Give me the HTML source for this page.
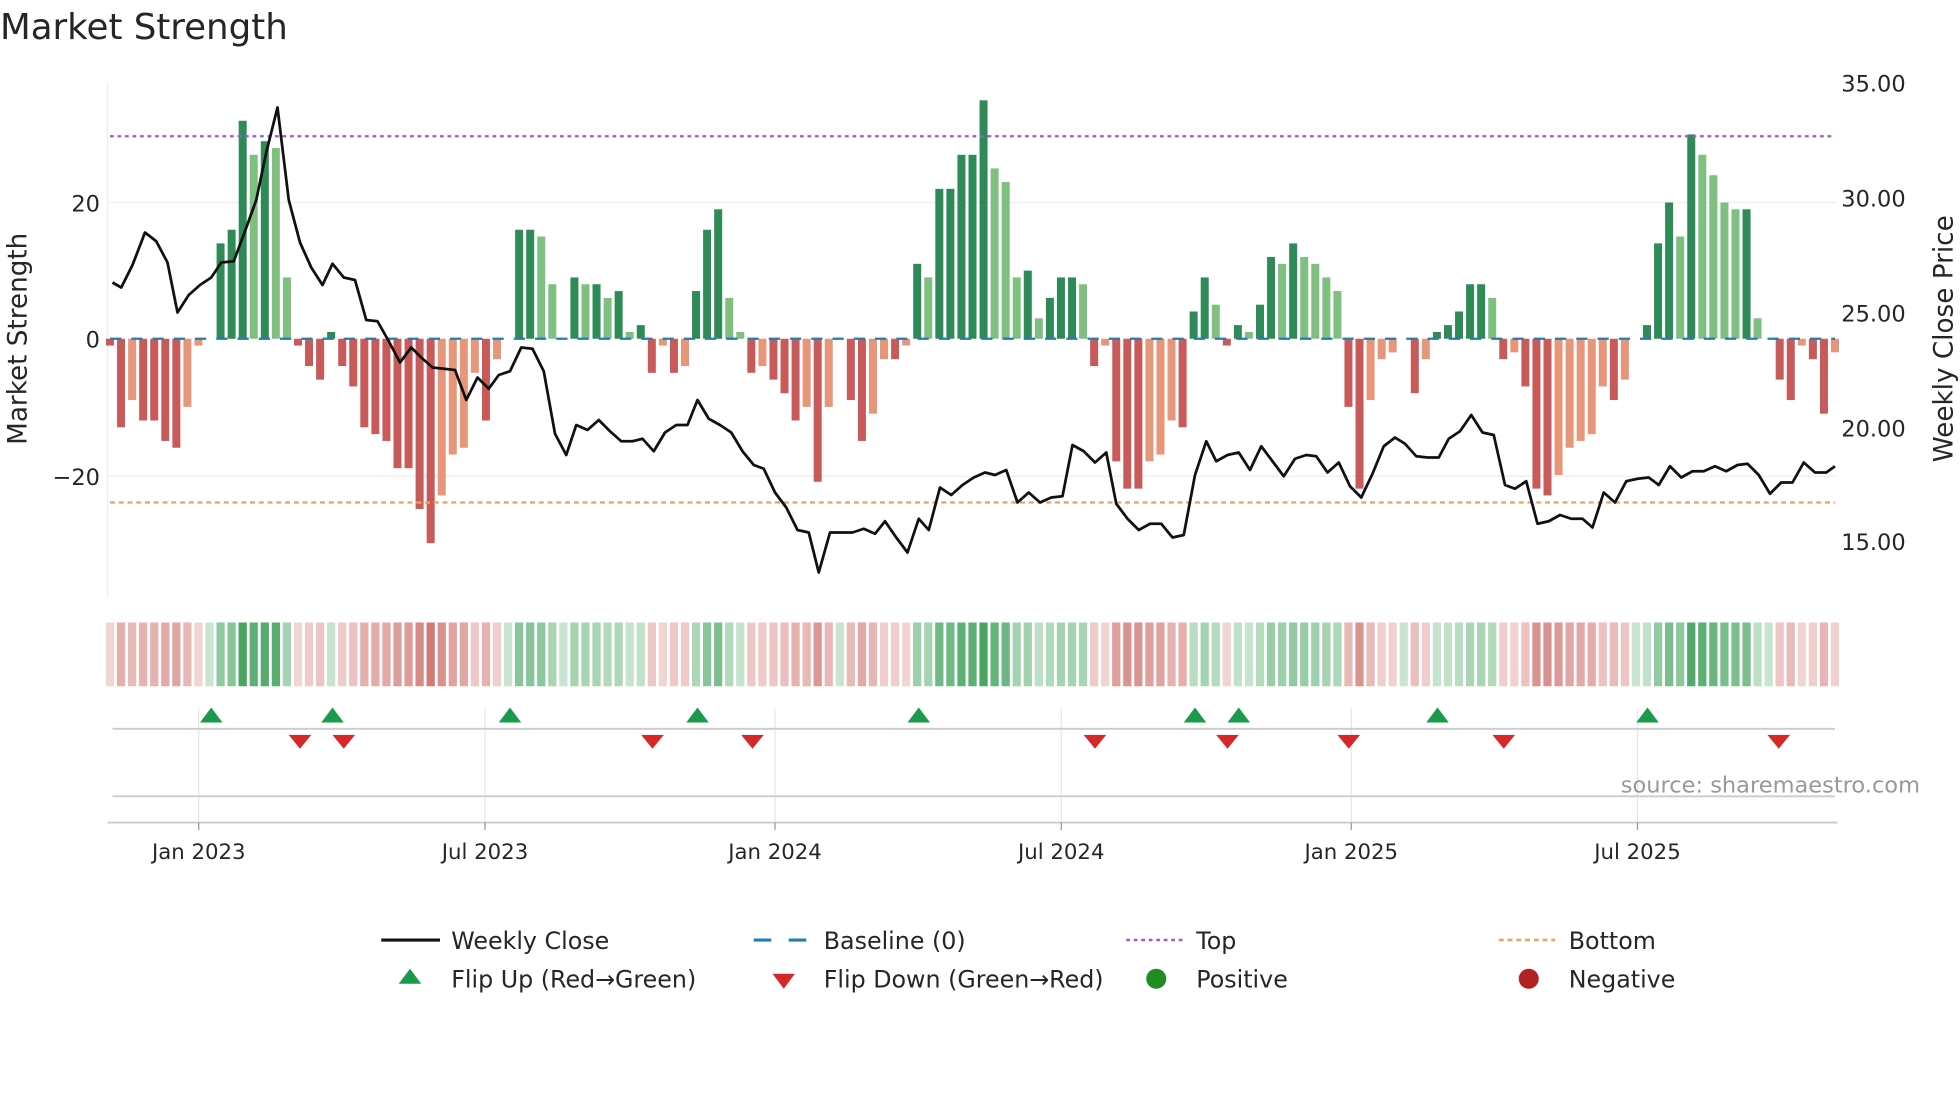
<!DOCTYPE html>
<html><head><meta charset="utf-8">
<style>
html,body{margin:0;padding:0;background:#fff;width:1960px;height:1102px;overflow:hidden}
svg{display:block}
text{font-family:"DejaVu Sans","Liberation Sans",sans-serif;fill:#262626}
</style></head>
<body>
<svg id="s" width="1960" height="1102" viewBox="0 0 1568 881.6" xmlns="http://www.w3.org/2000/svg">
<text x="0" y="31" font-size="28.5">Market Strength</text>
<line x1="86" y1="162" x2="1470" y2="162" stroke="#eee" stroke-width="1"/>
<line x1="86" y1="381" x2="1470" y2="381" stroke="#eee" stroke-width="1"/>
<line x1="86" y1="66" x2="86" y2="478" stroke="#eee" stroke-width="1"/>
<g font-size="18">
<text x="80" y="169" text-anchor="end">20</text>
<text x="80" y="278" text-anchor="end">0</text>
<text x="80" y="388" text-anchor="end">−20</text>
<text x="1473" y="73">35.00</text>
<text x="1473" y="165">30.00</text>
<text x="1473" y="257">25.00</text>
<text x="1473" y="349">20.00</text>
<text x="1473" y="440">15.00</text>
</g>
<text transform="translate(21,271) rotate(-90)" font-size="21" text-anchor="middle">Market Strength</text>
<text transform="translate(1562,271) rotate(-90)" font-size="21" text-anchor="middle">Weekly Close Price</text>
<g id="bars"></g>
<line x1="88" y1="109" x2="1468" y2="109" stroke="#9b59d6" stroke-width="1.8" stroke-dasharray="3,3"/>
<line x1="88" y1="402" x2="1468" y2="402" stroke="#f0a060" stroke-width="1.8" stroke-dasharray="4,3"/>
<line x1="88" y1="271" x2="1468" y2="271" stroke="#2a7ab0" stroke-width="1.8" stroke-dasharray="9,8"/>
<polyline id="price" fill="none" stroke="#111" stroke-width="2.2" stroke-linejoin="round"/>
<g id="heat"></g>
<g stroke="#e6e6ea" stroke-width="1">
<line x1="159" y1="567" x2="159" y2="658"/><line x1="388" y1="567" x2="388" y2="658"/><line x1="620" y1="567" x2="620" y2="658"/><line x1="849" y1="567" x2="849" y2="658"/><line x1="1081" y1="567" x2="1081" y2="658"/><line x1="1310" y1="567" x2="1310" y2="658"/>
</g>
<line x1="90" y1="583" x2="1468" y2="583" stroke="#ccc" stroke-width="1.5"/>
<line x1="90" y1="637" x2="1468" y2="637" stroke="#ccc" stroke-width="1.5"/>
<line x1="86" y1="658" x2="1470" y2="658" stroke="#ccc" stroke-width="1.5"/>
<g stroke="#999" stroke-width="1">
<line x1="159" y1="658" x2="159" y2="664"/><line x1="388" y1="658" x2="388" y2="664"/><line x1="620" y1="658" x2="620" y2="664"/><line x1="849" y1="658" x2="849" y2="664"/><line x1="1081" y1="658" x2="1081" y2="664"/><line x1="1310" y1="658" x2="1310" y2="664"/>
</g>
<g font-size="17" text-anchor="middle">
<text x="159" y="687">Jan 2023</text><text x="388" y="687">Jul 2023</text><text x="620" y="687">Jan 2024</text><text x="849" y="687">Jul 2024</text><text x="1081" y="687">Jan 2025</text><text x="1310" y="687">Jul 2025</text>
</g>
<g id="mk"></g>
<text x="1536" y="634" font-size="18" text-anchor="end" style="fill:#999">source: sharemaestro.com</text>
<g font-size="19">
<line x1="305" y1="752" x2="352" y2="752" stroke="#111" stroke-width="2.5"/>
<text x="361" y="759">Weekly Close</text>
<line x1="603" y1="752" x2="617" y2="752" stroke="#2a7ab0" stroke-width="2.5"/><line x1="631" y1="752" x2="645" y2="752" stroke="#2a7ab0" stroke-width="2.5"/>
<text x="659" y="759">Baseline (0)</text>
<line x1="901" y1="752" x2="946" y2="752" stroke="#9b59d6" stroke-width="2" stroke-dasharray="3,3"/>
<text x="957" y="759">Top</text>
<line x1="1199" y1="752" x2="1244" y2="752" stroke="#f0a060" stroke-width="2" stroke-dasharray="4,3"/>
<text x="1255" y="759">Bottom</text>
<polygon points="328,775 319,787 337,787" fill="#1a9a4a"/>
<text x="361" y="790">Flip Up (Red→Green)</text>
<polygon points="618,779 636,779 627,791" fill="#d62828"/>
<text x="659" y="790">Flip Down (Green→Red)</text>
<circle cx="925" cy="783" r="8" fill="#228b22"/>
<text x="957" y="790">Positive</text>
<circle cx="1223" cy="783" r="8" fill="#b22222"/>
<text x="1255" y="790">Negative</text>
</g>
</svg>
<script>
var v=[-1,-13,-9,-12,-12,-15,-16,-10,-1,0,14,16,32,27,29,28,9,-1,-4,-6,1,-4,-7,-13,-14,-15,-19,-19,-25,-30,-23,-17,-16,-5,-12,-3,0,16,16,15,8,0,9,8,8,6,7,1,2,-5,-1,-5,-4,7,16,19,6,1,-5,-4,-6,-8,-12,-10,-21,-10,0,-9,-15,-11,-3,-3,-1,11,9,22,22,27,27,35,25,23,9,10,3,6,9,9,8,-4,-1,-18,-22,-22,-18,-17,-12,-13,4,9,5,-1,2,1,5,12,11,14,12,11,9,7,-10,-22,-9,-3,-2,0,-8,-3,1,2,4,8,8,6,-3,-2,-7,-22,-23,-20,-16,-15,-14,-7,-9,-6,0,2,14,20,15,30,27,24,20,19,19,3,0,-6,-9,-1,-3,-11,-2];
var NS="http://www.w3.org/2000/svg";
function el(t,a,p){var e=document.createElementNS(NS,t);for(var k in a)e.setAttribute(k,a[k]);document.getElementById(p).appendChild(e);return e;}
var n=v.length,step=(1468-88)/(n-1);
for(var i=0;i<n;i++){
 var x=88+i*step,val=v[i],prev=i?v[i-1]:0,h=Math.abs(val)*5.45;
 var grow=(Math.sign(val)!=Math.sign(prev))||Math.abs(val)>=Math.abs(prev);
 var c=val>=0?(grow?"#2e8b57":"#7fbf7f"):(grow?"#c85a5a":"#e8967a");
 if(val!=0)el("rect",{x:x-3.2,y:val>0?271-h:271,width:6.4,height:h,fill:c},"bars");
 var a=Math.min(1,Math.abs(val)/32);var hc;
 if(val>=0){hc="rgba(40,150,70,"+(0.25+0.6*a)+")";}else{hc="rgba(195,75,70,"+(0.22+0.55*a)+")";}
 el("rect",{x:x-3.3,y:498,width:6.6,height:51,fill:hc},"heat");
}
var p=[[90,226],[97,230],[106,212],[116,186],[125,193],[134,210],[142,250],[151,236],[160,228],[169,222],[177,210],[187,209],[196,185],[205,160],[213,122],[222,86],[231,160],[240,194],[249,214],[258,228],[266,211],[275,222],[284,224],[293,256],[302,257],[311,273],[320,290],[329,278],[337,286],[346,294],[355,295],[364,296],[373,320],[382,302],[391,311],[399,300],[408,297],[417,278],[426,279],[435,297],[444,347],[453,364],[461,340],[470,344],[479,336],[488,345],[497,353],[506,353],[514,351],[523,361],[532,346],[541,340],[550,340],[558,320],[567,335],[576,340],[585,346],[594,361],[603,372],[611,375],[620,394],[629,406],[638,424],[647,426],[655,458],[664,426],[673,426],[682,426],[691,423],[700,427],[708,417],[717,430],[726,442],[735,415],[743,424],[752,390],[761,396],[770,388],[779,382],[788,378],[796,380],[805,376],[814,402],[823,394],[832,402],[841,398],[850,397],[858,356],[867,361],[876,370],[885,362],[893,403],[902,415],[911,424],[920,419],[929,419],[938,430],[947,428],[956,380],[965,353],[973,369],[982,364],[991,362],[1000,376],[1009,357],[1018,369],[1027,381],[1036,367],[1045,364],[1053,365],[1062,378],[1071,370],[1080,389],[1089,398],[1098,379],[1107,357],[1116,350],[1124,355],[1133,365],[1142,366],[1151,366],[1159,351],[1168,345],[1177,332],[1186,346],[1195,348],[1204,388],[1212,391],[1221,385],[1230,419],[1239,417],[1248,412],[1257,415],[1266,415],[1274,422],[1283,394],[1292,402],[1301,385],[1310,383],[1319,382],[1327,388],[1336,373],[1345,382],[1354,377],[1363,377],[1372,373],[1381,377],[1390,372],[1398,371],[1407,380],[1416,395],[1425,386],[1434,386],[1443,370],[1452,378],[1461,378],[1468,373]];
document.getElementById("price").setAttribute("points",p.map(function(q){return q.join(",")}).join(" "));
[169,266,408,558,735,956,991,1150,1318].forEach(function(x){el("polygon",{points:x+",566 "+(x-9)+",578 "+(x+9)+",578",fill:"#1a9a4a"},"mk");});
[240,275,522,602,876,982,1079,1203,1423].forEach(function(x){el("polygon",{points:(x-9)+",588 "+(x+9)+",588 "+x+",599",fill:"#d62828"},"mk");});
</script>
</body></html>
